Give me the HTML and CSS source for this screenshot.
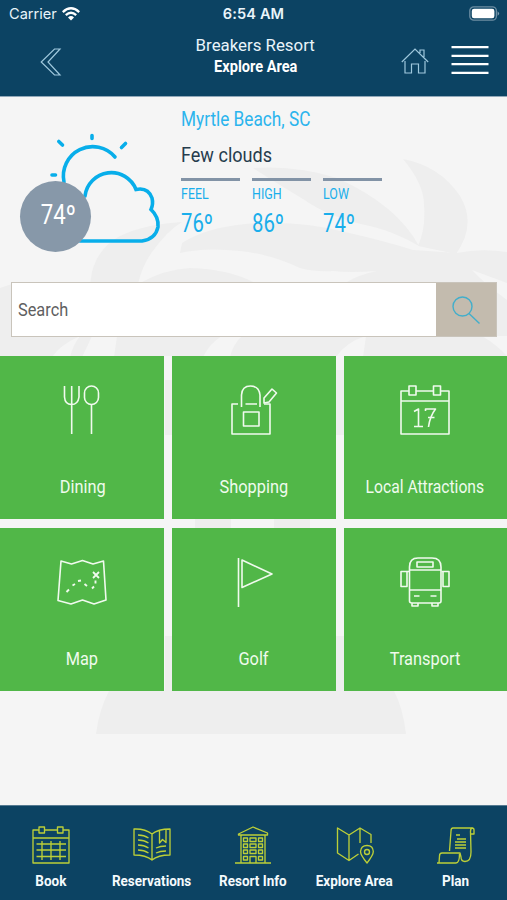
FILE: index.html
```html
<!DOCTYPE html>
<html lang="en">
<head>
<meta charset="utf-8">
<title>Explore Area</title>
<link rel="stylesheet" href="styles.css">
</head>
<body>
<div class="app">
  <header class="header">
    <div class="status">
      <div class="carrier">
        <span>Carrier</span>
        <svg width="18" height="14" viewBox="0 0 18 14" fill="none" stroke="#fff" stroke-width="2.3"><path d="M.8 5.1Q9-2.6 17.2 5.1M3.8 8.2Q9 3.3 14.2 8.2"/><path d="M6 10.4Q9 7.8 12 10.4L9 13.6Z" fill="#fff" stroke="none"/></svg>
      </div>
      <span class="time">6:54 AM</span>
      <svg class="battery" width="31" height="15" viewBox="0 0 31 15"><rect x=".8" y=".8" width="26.6" height="13.4" rx="4" fill="none" stroke="#6d8ea3" stroke-width="1.3"/><rect x="2.8" y="2.7" width="22.6" height="9.6" rx="2.2" fill="#fff"/><path d="M28.6 5.2Q31.6 7.5 28.6 9.8Z" fill="#819daf"/></svg>
    </div>
    <div class="bar">
      <svg class="back" width="22" height="28" viewBox="0 0 22 28" fill="none" stroke="#9fc8dd" stroke-width="1.2"><path d="M14.5 1H20L8 14 20 27H14.5L1.2 14Z"/></svg>
      <div class="titles">
        <span class="resort"><b class="fit">Breakers Resort</b></span>
        <span class="page"><b class="fit">Explore Area</b></span>
      </div>
      <div class="actions">
        <svg width="28" height="28" viewBox="0 0 28 28" fill="none" stroke="#9fc8dd" stroke-width="1.2"><path d="M.8 15 14 2 27.2 15M19 6V3H23V10M4 14V26H10.5V17H17.5V26H24V14"/></svg>
        <svg width="38" height="30" viewBox="0 0 38 30" stroke="#fff" stroke-width="2.3"><path d="M.5 2.2H37.5M.5 10.8H37.5M.5 19.2H37.5M.5 27.8H37.5"/></svg>
      </div>
    </div>
  </header>

  <main class="main">
    <svg class="palm" width="507" height="708" viewBox="0 97 507 708" fill="#eeeeee">
      <path d="M92 272Q98 248 120 236Q145 224 182 222Q168 230 152 252Q142 266 138 284H90Z"/>
      <path d="M182 243Q205 228 245 224Q300 220 345 232Q385 241 413 250L457 253Q480 248 507 252V283Q488 276 472 270Q485 284 507 300V356H0V288Q6 286 12 284H343Q360 274 377 271Q350 273 333 271Q315 272 300 268Q270 254 240 251Q205 247 180 253Z"/>
      <path d="M138 284Q165 269 190 268Q230 269 257 284Z"/>
      <path d="M253 168Q297 165 337 178Q397 205 419 246Q395 232 370 226Q330 218 303 199Q275 182 253 168ZM403 159Q440 166 460 196Q477 224 456 254L418 246Q426 228 424 205Q424 184 403 159Z"/>
      <path d="M165 380H172V435H165ZM165 636H344V691H165ZM336 370H344V435H336Z"/>
      <path d="M109 691H394Q403 708 406 734H96Q99 710 109 691Z"/>
      <path d="M195 519H231V529H195ZM274 519H310V529H274Z"/>
      <path d="M52 357Q60 345 80 336Q73 345 70 357ZM82 357Q88 345 92 336H117L114 357ZM203 357Q210 343 222 336H242Q233 344 230 357ZM336 357Q346 342 366 336L363 357ZM482 336H507V356Q497 345 482 336Z" fill="#f5f5f5"/>
    </svg>

    <section class="weather">
      <div class="sky">
        <svg width="141" height="112" viewBox="0 0 141 112" fill="none" stroke="#08aeea" stroke-width="3.6" stroke-linecap="round"><path d="M44 50A29.300 29.300 0 0 1 95 25"/><path d="M65 64A26.500 26.500 0 0 1 116 57.500Q128 55 132 66Q133.500 72 131 77.500Q139 85 138 95Q135.500 107 122 109H60"/><path d="M72 3.500V6.500M38.800 9.500 42.500 13M105.500 11.500 101.500 15.500M32 43H35.500"/></svg>
        <div class="now"><b class="fit">74º</b></div>
      </div>
      <div class="report">
        <div class="city"><b class="fit">Myrtle Beach, SC</b></div>
        <div class="sum"><b class="fit">Few clouds</b></div>
        <div class="temps">
          <div class="temp"><span class="lab"><b class="fit">FEEL</b></span><span class="val"><b class="fit">76º</b></span></div>
          <div class="temp"><span class="lab"><b class="fit">HIGH</b></span><span class="val"><b class="fit">86º</b></span></div>
          <div class="temp"><span class="lab"><b class="fit">LOW</b></span><span class="val"><b class="fit">74º</b></span></div>
        </div>
      </div>
    </section>

    <div class="search">
      <div class="field"><b class="fit">Search</b></div>
      <div class="go"><svg width="28" height="28" viewBox="0 0 28 28" fill="none" stroke="#42aecb" stroke-width="1.4"><circle cx="10.500" cy="10.500" r="9.500"/><path d="M17 17.500 27.500 27.500"/></svg></div>
    </div>

    <div class="grid">
      <div class="tile"><svg width="50" height="50" viewBox="0 0 50 50"><path d="M7.500 1V12Q8 19.500 14.500 19.500T22 12V1M14.700 1V49M34.500 20V49"/><rect x="27.500" y="1" width="14" height="18.500" rx="7"/></svg><span><b class="fit">Dining</b></span></div>
      <div class="tile"><svg width="50" height="50" viewBox="0 0 50 50"><path d="M9 19H3V49H41V19H35M12.500 22V10Q13 1 21.500 1T31 10V22M16.500 19H28"/><rect x="14.500" y="27" width="15.500" height="14"/><path d="M43 4 47.500 8 40 17 35 18V13Z"/></svg><span><b class="fit">Shopping</b></span></div>
      <div class="tile"><svg width="50" height="50" viewBox="0 0 50 50"><path d="M9 6H1V49H49V6H40M16 6H33M1 16H49"/><rect x="9" y="1" width="7" height="9"/><rect x="33.500" y="1" width="7" height="9"/><path d="M14 26.500 18.500 24V41M14 41.500H23M25.500 26V24H35.500Q30 31 28.500 42M28 32.500H34.500"/></svg><span class="long"><b class="fit">Local Attractions</b></span></div>
      <div class="tile"><svg width="50" height="50" viewBox="0 0 50 50"><path d="M4 4 14.500 7 25.500 3.500 36 7 46.500 4 49 43 37 47 25.500 43 14 47 1 43.500Z"/><path d="M36 15 42 21M42 15 36 21" stroke-width="1.800"/><path d="M9.500 35 12 32.500M15.500 28.500 18 27M21 24 24 23.500M27.500 27 30 29M35 31.500 37 29.500M38.500 26.500V23.500" stroke-width="1.900"/></svg><span><b class="fit">Map</b></span></div>
      <div class="tile"><svg width="50" height="50" viewBox="0 0 50 50"><path d="M9.500 1V50M13 3 43 17 13 30.500Z"/></svg><span><b class="fit">Golf</b></span></div>
      <div class="tile"><svg width="50" height="50" viewBox="0 0 50 50"><path d="M9.500 44V10Q9.500 1 18 1H32Q41 1 41 10V44Q41 46 39 46H12Q9.500 46 9.500 44ZM9.500 13H41M9.500 33H41M14 39H19.500M30.500 39H36.500M12 46V49H18V46M32 46V49H38V46"/><rect x="17" y="5" width="16" height="5"/><path d="M9 14.500H1V29.500H7V15M41.500 14.500H49V29.500H43V15"/></svg><span><b class="fit">Transport</b></span></div>
    </div>
  </main>

  <nav class="nav">
    <div class="item"><svg width="38" height="38" viewBox="0 0 38 38"><path d="M7 4H1V37H37V4H31M12.500 4H25M1 12H37M4.500 18H34M4.500 24H34M4.500 30.500H34M10 15V34M19 15V34M28 15V34"/><rect x="7" y="1" width="5.500" height="6"/><rect x="25.500" y="1" width="5.500" height="6"/></svg><span><b class="fit">Book</b></span></div>
    <div class="item"><svg width="38" height="38" viewBox="0 0 38 38"><path d="M19 8Q12 2.500 1 3V29Q13 29 19 34Q25 29 37 29V3Q25 3 19 8V34M5 9Q11 9 15.500 12M5 14Q11 14 15.500 17M5 19Q11 19 15.500 22M5 24Q11 24 15.500 27M23 22Q27 20 33 20M23 27Q27 25 33 25M26.500 4.500V17L29.500 13.500 33 16.500V3.500"/></svg><span><b class="fit">Reservations</b></span></div>
    <div class="item"><svg width="38" height="38" viewBox="0 0 38 38"><path d="M1 37H37M7 37V9M31 37V9M4.500 8 19 1 33.500 7V9H4.500ZM16 37V30.500H22V37"/><path d="M9.500 12H13.500V15.500H9.500ZM16 12H22V15.500H16ZM24.500 12H28.500V15.500H24.500ZM9.500 18H13.500V21.500H9.500ZM16 18H22V21.500H16ZM24.500 18H28.500V21.500H24.500ZM9.500 24H13.500V27.500H9.500ZM16 24H22V27.500H16ZM24.500 24H28.500V27.500H24.500ZM9.500 30.500H13.500V34H9.500ZM24.500 30.500H28.500V34H24.500Z"/></svg><span><b class="fit">Resort Info</b></span></div>
    <div class="item"><svg width="38" height="38" viewBox="0 0 38 38"><path d="M22.500 28 13 34.500 1.500 27V2L13 9 24 2 35 8.500V17M13 9V34.500M24 2V17"/><path d="M31 37Q24.500 29 24.500 25.500Q25 19.500 31 19.500T37.300 25.500Q37.300 29 31 37Z"/><circle cx="31" cy="26" r="2.500"/></svg><span><b class="fit">Explore Area</b></span></div>
    <div class="item"><svg width="38" height="38" viewBox="0 0 38 38"><path d="M12.500 25 14 5Q14 2 16 2H35Q37 2 37 4V8H33.500M35.500 2Q33.500 2 33.500 5.500L34 26Q34 35.500 28 35.500Q24 35.500 24 31L23 27H5Q2.500 27 2.500 30L2 37H19Q22.500 37 22.500 28M0 37H19M19 9H23M20 13H29M18 16H29M18 19H29M18 22H29"/></svg><span><b class="fit">Plan</b></span></div>
  </nav>
</div>
</body>
</html>
```
FILE: styles.css
```css
* { box-sizing: border-box; }
body { margin: 0; font-family: Roboto, "Liberation Sans", sans-serif; }
.app { width: 507px; height: 900px; display: flex; flex-direction: column; background: #f5f5f5; overflow: hidden; }
svg { display: block; flex: none; }
.fit { display: inline-block; font-weight: inherit; white-space: nowrap; transform: scaleX(.86); }

.header { height: 97px; background: #0c4363; border-bottom: 1px solid #91a8b9; color: #e9f4fa; }
.status { height: 27px; display: grid; grid-template-columns: 1fr auto 1fr; align-items: center; padding: 0 7px 0 9px; font: 14.6px Inter, sans-serif; }
.carrier { display: flex; align-items: center; gap: 5px; }
.time { font-weight: 600; letter-spacing: .1px; margin-left: -2px; }
.battery { justify-self: end; }
.bar { display: grid; grid-template-columns: 1fr auto 1fr; height: 69px; padding: 0 18px 0 22px; }
.back { margin: 21px 0 0 18px; }
.titles { display: flex; flex-direction: column; align-items: center; padding-top: 7px; }
.resort { font-size: 17px; line-height: 22px; }
.page { font-size: 16px; line-height: 22px; font-weight: 700; color: #fff; }
.resort .fit { transform: scaleX(.99); }
.page .fit { transform: scaleX(.91); }
.actions { display: flex; justify-content: flex-end; gap: 22px; padding-top: 18px; }
.actions svg:first-child { margin-top: 2px; }

.main { position: relative; flex: 1; min-height: 0; }
.palm { position: absolute; inset: 0; }
.weather { position: relative; height: 185px; display: flex; }
.sky { width: 180.5px; padding: 35px 0 0 20px; }
.now { position: relative; margin: -63px 0 0 .4px; padding-left: 4px; width: 71px; height: 71px; border-radius: 50%; background: #8798a9; color: #fff; font-size: 27px; line-height: 69px; text-align: center; }
.now .fit { transform: scaleX(.82); }
.report { padding-top: 9px; }
.report .fit { transform-origin: left; }
.city { font-size: 20px; line-height: 26px; color: #2bb4ed; }
.sum { font-size: 21px; line-height: 28px; margin-top: 9px; color: #263c4d; }
.temps { display: flex; gap: 12px; margin-top: 9px; }
.temp { width: 59px; border-top: 3px solid #8293a6; color: #1aaeeb; display: flex; flex-direction: column; }
.lab { font-size: 15px; line-height: 20px; margin-top: 3px; }
.lab .fit { transform: scaleX(.83); }
.val { font-size: 26px; line-height: 30px; margin-top: 4px; }
.val .fit { transform: scaleX(.78); }

.search { position: relative; display: flex; margin: 0 10px 0 11px; height: 55px; border: 1px solid #c9c4bb; background: #fff; }
.field { flex: 1; padding-left: 6px; font-size: 19px; line-height: 53px; color: #5f5f61; }
.field .fit { transform-origin: left; }
.go { width: 60px; background: #c3bbae; display: flex; align-items: center; justify-content: center; }

.grid { position: relative; display: grid; grid-template-columns: 164.4px 163.8px 163.5px; grid-template-rows: 163px 163px; column-gap: 7.7px; row-gap: 9px; margin-top: 19.4px; }
.tile { background: #51b748; color: #effbed; display: flex; flex-direction: column; align-items: center; padding-top: 29px; font-size: 19px; line-height: 24px; }
.tile svg { fill: none; stroke: #f0faee; stroke-width: 1.6; stroke-linejoin: round; }
.tile span { margin-top: 40px; }
.tile .long .fit { transform: scaleX(.825); }

.nav { height: 95px; background: #0c4363; display: grid; grid-template-columns: repeat(5, 101.3px); padding-top: 20px; border-top: 1px solid #557a91; color: #f4fafd; font-size: 15.5px; line-height: 20px; font-weight: 700; }
.nav .fit { transform: scaleX(.87); }
.item { display: flex; flex-direction: column; align-items: center; }
.item svg { fill: none; stroke: #bccf38; stroke-width: 1.35; stroke-linejoin: round; }
.item span { margin-top: 7px; }
```
